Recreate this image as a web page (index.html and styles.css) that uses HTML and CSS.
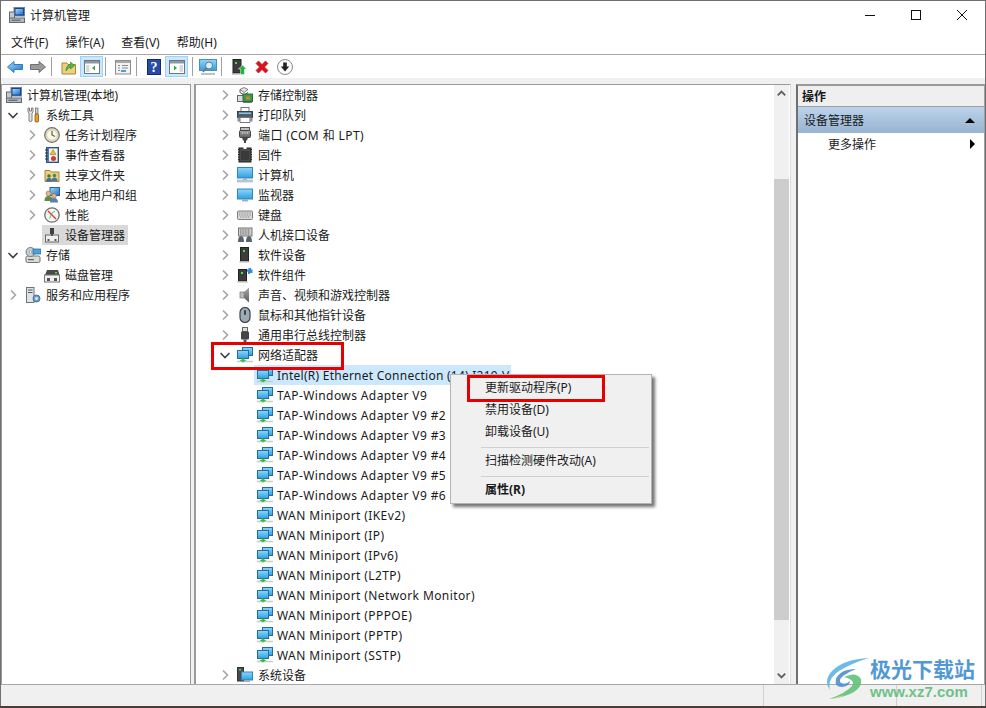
FILE: index.html
```html
<!DOCTYPE html>
<html lang="zh-CN">
<head>
    <meta charset="UTF-8">
    <title>计算机管理</title>
    <link rel="stylesheet" href="styles.css">
</head>
<body>
    <!-- iconos -->
    <svg class="defs" width="0" height="0">
        <defs>
            <linearGradient id="g-screen" x1="0" y1="0" x2="0" y2="1"><stop offset="0" stop-color="#8fd6fa"/><stop offset="1" stop-color="#2f9fe0"/></linearGradient>
            <linearGradient id="g-blue" x1="0" y1="0" x2="1" y2="1"><stop offset="0" stop-color="#9ed8fb"/><stop offset="1" stop-color="#1e74c4"/></linearGradient>
            <linearGradient id="g-gray" x1="0" y1="0" x2="0" y2="1"><stop offset="0" stop-color="#a8a8a8"/><stop offset="1" stop-color="#5c5c5c"/></linearGradient>
            <symbol id="c-right" viewBox="0 0 16 16"><path d="M6 3.500l4.500 4.500-4.500 4.500" fill="none" stroke="#a6a6a6" stroke-width="1.600"/></symbol>
            <symbol id="c-down" viewBox="0 0 16 16"><path d="M3.500 6l4.500 4.500 4.500-4.500" fill="none" stroke="#404040" stroke-width="1.600"/></symbol>
            <symbol id="i-mgmt" viewBox="0 0 16 16"><rect x="5" y="0.500" width="10.500" height="8.500" fill="#1d3f9e" stroke="#6d7f9a"/><rect x="6.500" y="2" width="7.500" height="5.500" fill="url(#g-blue)"/><rect x="0.500" y="5" width="5" height="8" fill="#c4c8cc" stroke="#5f6a74"/><rect x="0.500" y="11" width="15" height="4.500" fill="#b4b9bd" stroke="#5f6a74"/><rect x="2.500" y="12.700" width="9" height="1" fill="#555"/></symbol>
            <symbol id="i-tools" viewBox="0 0 16 16"><path d="M3 1v4l1 1v8q1.500 1 3 0V6l1-1V1L6.500 1v3h-2V1z" fill="#e4e4e4" stroke="#666" stroke-width=".8"/><rect x="10.500" y="1" width="2.500" height="6" fill="#d0d0d0" stroke="#666" stroke-width=".7"/><rect x="10" y="7" width="3.500" height="8" rx="1" fill="#e0a526" stroke="#82570c" stroke-width=".8"/></symbol>
            <symbol id="i-clock" viewBox="0 0 16 16"><circle cx="8" cy="8" r="7.300" fill="#e9e3c9" stroke="#70706a" stroke-width="1.200"/><circle cx="8" cy="8" r="5.300" fill="#fbf8e6" stroke="#c5bd93" stroke-width=".6"/><path d="M8 3.800V8l3 1.500" fill="none" stroke="#5b5b50" stroke-width="1.200"/></symbol>
            <symbol id="i-log" viewBox="0 0 16 16"><rect x="2.500" y="0.500" width="12" height="15" fill="#4f7fb4" stroke="#2f527c"/><rect x="5" y="1.500" width="8.500" height="13" fill="#f4f4ee"/><path d="M1 3h3M1 6h3M1 9h3M1 12h3" stroke="#333" stroke-width="1"/><path d="M9 2.500l3 5H6z" fill="#f0c020" stroke="#8a6a00" stroke-width=".5"/><circle cx="9.500" cy="11.500" r="2.500" fill="#d23a3a"/></symbol>
            <symbol id="i-share" viewBox="0 0 16 16"><path d="M1 3.500h5l1.500 1.500h7.500v9.500H1z" fill="#edcf80" stroke="#a5843a"/><circle cx="5" cy="9" r="1.800" fill="#3f7f3a"/><path d="M2 14.500q0-3.500 3-3.500t3 3.500z" fill="#3f6fa8"/><circle cx="10.500" cy="8.500" r="1.800" fill="#4b8b46"/><path d="M7.500 14q0-3.500 3-3.500t3 3.500z" fill="#4578b0"/></symbol>
            <symbol id="i-users" viewBox="0 0 16 16"><rect x="6" y="0.500" width="9.500" height="8" fill="url(#g-blue)" stroke="#3b5f8a"/><circle cx="4.500" cy="6.500" r="2.500" fill="#e3b78a" stroke="#7a5a3a" stroke-width=".5"/><path d="M0.500 14q0-5 4-5t4 5z" fill="#5b8c4a"/><circle cx="10" cy="9" r="2.300" fill="#e3b78a" stroke="#7a5a3a" stroke-width=".5"/><path d="M6 15.500q0-4.500 4-4.500t4 4.500z" fill="#5c7ea8"/></symbol>
            <symbol id="i-perf" viewBox="0 0 16 16"><circle cx="8" cy="8" r="7.200" fill="#f6f6f0" stroke="#6e6e6e" stroke-width="1.300"/><path d="M4 4l5 5 3 3" stroke="#d33" stroke-width="1.300" fill="none"/><path d="M5.500 11.500L8 6l3-2" stroke="#3a6" stroke-width=".8" fill="none"/></symbol>
            <symbol id="i-dev" viewBox="0 0 16 16"><rect x="6" y="1" width="4" height="6" fill="#3f3f3f"/><rect x="1.500" y="8" width="13" height="7" fill="#efefef" stroke="#6a6a6a"/><rect x="3.500" y="12" width="2" height="2" fill="#555"/><rect x="10.500" y="12" width="2" height="2" fill="#555"/><rect x="7" y="7" width="2" height="2" fill="#555"/></symbol>
            <symbol id="i-store" viewBox="0 0 16 16"><rect x="1" y="9" width="14" height="6.500" rx="1.500" fill="#d8dcd8" stroke="#6c756c"/><rect x="3" y="12" width="6" height="1.200" fill="#666"/><circle cx="5.500" cy="5" r="4.500" fill="#c9ced0" stroke="#6f7a80"/><circle cx="5.500" cy="5" r="1.300" fill="#fff" stroke="#6f7a80" stroke-width=".6"/><rect x="8" y="2" width="7.500" height="5" fill="#4aa3dd" stroke="#2d6f9e" stroke-width=".8"/></symbol>
            <symbol id="i-disk" viewBox="0 0 16 16"><path d="M3 3h11l1.500 5H1z" fill="#4a4a4a"/><rect x="0.500" y="8" width="15" height="7" fill="#efefef" stroke="#777"/><rect x="3" y="11" width="3" height="3" fill="#555"/><rect x="10" y="11" width="3" height="3" fill="#555"/><rect x="11" y="5" width="2" height="1.500" fill="#4ce04c"/></symbol>
            <symbol id="i-svc" viewBox="0 0 16 16"><rect x="1.500" y="0.500" width="7.500" height="15" fill="#dfe3e6" stroke="#6c747a"/><path d="M3 3h4.500M3 5.500h4.500" stroke="#556" stroke-width="1"/><circle cx="11.500" cy="11.500" r="3.500" fill="#6ea0cc" stroke="#47719a"/><circle cx="11.500" cy="11.500" r="1.300" fill="#eef4fa"/></symbol>
            <symbol id="i-ctrl" viewBox="0 0 16 16"><path d="M3 2.500l4-2 4 2-4 3z" fill="#e4e4e4" stroke="#555" stroke-width=".7"/><path d="M3 2.500v3l4 2.500 4-2.500" fill="none" stroke="#555"/><rect x="0.500" y="8.500" width="8" height="6" fill="#dcdcdc" stroke="#666"/><rect x="6" y="7" width="9.500" height="7.500" fill="#3f9a4e" stroke="#2c6b37"/><rect x="9" y="9.500" width="4" height="3" fill="#c58a2a"/><path d="M6 15.500h9" stroke="#777"/></symbol>
            <symbol id="i-print" viewBox="0 0 16 16"><rect x="4" y="0.500" width="8" height="4" fill="#fff" stroke="#777"/><rect x="0.500" y="4.500" width="15" height="6" fill="#555c66" stroke="#3c4148"/><rect x="2" y="5.500" width="12" height="1.500" fill="#7fc7ee"/><path d="M3 10.500h10v5H3z" fill="#fff" stroke="#777"/><path d="M0.500 10.500h2.500v4H0.500zM13 10.500h2.500v4H13z" fill="#8a8f96"/></symbol>
            <symbol id="i-port" viewBox="0 0 16 16"><rect x="3.500" y="0.500" width="9" height="3" fill="#c0c0c0" stroke="#555"/><rect x="2.500" y="3.500" width="11" height="7" rx="1" fill="url(#g-gray)" stroke="#444"/><path d="M5 6h1M7.500 6h1M10 6h1" stroke="#eee"/><path d="M5 10.500h6l-1 3H6z" fill="#444"/><rect x="7" y="13" width="2" height="3" fill="#444"/></symbol>
            <symbol id="i-chip" viewBox="0 0 16 16"><rect x="2" y="1" width="12" height="14" fill="#4a4a4a" stroke="#222"/><path d="M2 2.500H1M2 5H1M2 7.500H1M2 10H1M2 12.500H1M14 2.500h1M14 5h1M14 7.500h1M14 10h1M14 12.500h1" stroke="#222"/><rect x="6.500" y="0" width="3" height="2" fill="#fff"/><rect x="4" y="4" width="8" height="9" fill="#3a3a3a"/></symbol>
            <symbol id="i-pc" viewBox="0 0 16 16"><rect x="0.500" y="0.500" width="15" height="10.500" fill="url(#g-screen)" stroke="#2e87bd"/><rect x="6" y="11" width="4" height="2" fill="#a8b6bf"/><rect x="0.500" y="13" width="15" height="2" fill="#c9d3d9" stroke="#99a5ad" stroke-width=".6"/></symbol>
            <symbol id="i-mon" viewBox="0 0 16 16"><rect x="0.500" y="2" width="15" height="10" fill="url(#g-screen)" stroke="#2e87bd"/><rect x="5" y="12" width="6" height="2.500" fill="#9fb0ba"/></symbol>
            <symbol id="i-kbd" viewBox="0 0 16 16"><rect x="0.500" y="4" width="15" height="8.500" rx="1" fill="#d8d8d8" stroke="#7e7e7e"/><path d="M2 6h12M2 8h12M3 10h10" stroke="#8e8e8e" stroke-dasharray="1 .6"/></symbol>
            <symbol id="i-hid" viewBox="0 0 16 16"><rect x="1.500" y="1" width="13.500" height="8" fill="#cfcfcf" stroke="#777"/><path d="M3 3h10M3 5h10M3 7h10" stroke="#666" stroke-dasharray="1 .6"/><path d="M1 15q0-6 3-6t3 6zM9 15q0-6 3-6t3 6z" fill="#586270"/></symbol>
            <symbol id="i-sw" viewBox="0 0 16 16"><rect x="3.500" y="0.500" width="8" height="13.500" fill="#3c3c3c" stroke="#222"/><rect x="6" y="3" width="2" height="2" fill="#4ae04a"/><rect x="2.500" y="14" width="10" height="1.500" fill="#b5b5b5"/></symbol>
            <symbol id="i-comp" viewBox="0 0 16 16"><rect x="1.500" y="2.500" width="8" height="11.500" fill="#3c3c3c" stroke="#222"/><rect x="4" y="5" width="2" height="2" fill="#4ae04a"/><rect x="0.500" y="14" width="10" height="1.500" fill="#b5b5b5"/><path d="M10 4V2.500h1.500V1H14v1.500h1.500v3.500H13v1h-2V5.500z" fill="#2e8fd8"/></symbol>
            <symbol id="i-snd" viewBox="0 0 16 16"><rect x="3" y="5" width="4" height="6" fill="#bdbdbd" stroke="#777" stroke-width=".7"/><path d="M7 5l5-4.500v15L7 11z" fill="url(#g-gray)"/></symbol>
            <symbol id="i-mouse" viewBox="0 0 16 16"><rect x="3" y="0.500" width="10" height="15" rx="5" fill="#9eabb5" stroke="#39424a" stroke-width="1.200"/><rect x="7" y="3" width="2" height="5" rx="1" fill="#39424a"/></symbol>
            <symbol id="i-usb" viewBox="0 0 16 16"><rect x="5.500" y="0.500" width="5" height="4" fill="#ddd" stroke="#666"/><rect x="4" y="4.500" width="8" height="8" rx="1" fill="#454545"/><rect x="6.500" y="12.500" width="3" height="3" fill="#555"/></symbol>
            <symbol id="i-net" viewBox="0 0 16 16"><rect x="5.500" y="0.500" width="10" height="8" fill="url(#g-screen)" stroke="#1e6f9f"/><rect x="0.500" y="3.500" width="11" height="8" fill="url(#g-screen)" stroke="#1e6f9f"/><path d="M0 14.500h16" stroke="#c5cdc5" stroke-width="1.500"/><path d="M4.500 11.500h3V13H9.500L6 15.500 2.500 13h2z" fill="#3fbd3f"/></symbol>
            <symbol id="i-sys" viewBox="0 0 16 16"><rect x="0.500" y="0.500" width="6" height="13.500" fill="#4a4a4a" stroke="#333"/><rect x="2" y="2" width="2" height="1.500" fill="#4ae04a"/><rect x="4.500" y="5" width="11" height="8" fill="url(#g-screen)" stroke="#2e87bd"/><rect x="7" y="13" width="6" height="2" fill="#9fb0ba"/></symbol>
        </defs>
    </svg>

    <div class="window">
        <div class="titlebar">
            <svg class="ico"><use href="#i-mgmt"/></svg>
            <span class="title-text">计算机管理</span>
            <div class="win-btns">
                <svg width="46" height="16" viewBox="0 0 46 16"><path d="M18 8.500h10" stroke="#111"/></svg>
                <svg width="46" height="16" viewBox="0 0 46 16"><rect x="18.500" y="3.500" width="9" height="9" fill="none" stroke="#111"/></svg>
                <svg width="46" height="16" viewBox="0 0 46 16"><path d="M18 3l10 10M28 3L18 13" stroke="#111"/></svg>
            </div>
        </div>
        <div class="menubar">
            <span>文件(F)</span>
            <span>操作(A)</span>
            <span>查看(V)</span>
            <span>帮助(H)</span>
        </div>
        <div class="toolbar">
            <div class="tb-btn"><svg width="16" height="16" viewBox="0 0 16 16"><path d="M0.500 8L7 2.500V5.500h8.500v5H7v3z" fill="url(#g-blue)" stroke="#2d7cc0"/></svg></div>
            <div class="tb-btn"><svg width="16" height="16" viewBox="0 0 16 16"><path d="M15.500 8L9 2.500V5.500H0.500v5H9v3z" fill="#9a9a9a" stroke="#6e6e6e"/></svg></div>
            <div class="tb-sep"></div>
            <div class="tb-btn"><svg width="16" height="16" viewBox="0 0 16 16"><path d="M1 4h5l1 1.500h7.500V15H1z" fill="#ecd07e" stroke="#a98834"/><path d="M5 12q0-6 4.500-6.500V3l4 3.500-4 3.500V8Q7 8.500 5 12z" fill="#53b84a" stroke="#2f8029" stroke-width=".6"/></svg></div>
            <div class="tb-btn on"><svg width="16" height="16" viewBox="0 0 16 16"><rect x="0.500" y="1.500" width="15" height="13" fill="#fff" stroke="#6d7680"/><rect x="1" y="2" width="14" height="2.500" fill="#8d98a3"/><rect x="2" y="6" width="3.500" height="7" fill="#d6dbe0"/><path d="M11 6.500v5l-3-2.500z" fill="#2da84a"/></svg></div>
            <div class="tb-sep"></div>
            <div class="tb-btn"><svg width="16" height="16" viewBox="0 0 16 16"><rect x="0.500" y="1.500" width="15" height="13.500" fill="#f2f2f2" stroke="#8c8c8c"/><rect x="1" y="2" width="14" height="2" fill="#a9a9a9"/><path d="M3 6.500h2M3 9h2M3 11.500h2M7 6.500h6M7 9h6" stroke="#8a8a8a"/><rect x="6" y="11" width="5" height="2" fill="#4a9fd8"/></svg></div>
            <div class="tb-sep"></div>
            <div class="tb-btn"><svg width="14" height="16" viewBox="0 0 14 16"><rect x="0.500" y="0.500" width="13" height="15" fill="#2a4aa8" stroke="#16296b"/><text x="7" y="13" class="help-q">?</text></svg></div>
            <div class="tb-btn on"><svg width="16" height="16" viewBox="0 0 16 16"><rect x="0.500" y="1.500" width="15" height="13" fill="#fff" stroke="#6d7680"/><rect x="1" y="2" width="14" height="2.500" fill="#8d98a3"/><rect x="10.500" y="6" width="3.500" height="7" fill="#d6dbe0"/><path d="M5 6.500v5l3-2.500z" fill="#2da84a"/></svg></div>
            <div class="tb-sep wide"></div>
            <div class="tb-btn"><svg width="18" height="16" viewBox="0 0 18 16"><rect x="0.500" y="0.500" width="17" height="11" fill="url(#g-screen)" stroke="#4f8fb6"/><path d="M2 15h14" stroke="#9fb0ba" stroke-width="1.500"/><circle cx="10" cy="6.500" r="3.500" fill="#d7eefb" stroke="#6b7780"/><path d="M7.500 9L4 13" stroke="#6b7780" stroke-width="1.500"/></svg></div>
            <div class="tb-sep"></div>
            <div class="tb-btn"><svg width="16" height="16" viewBox="0 0 16 16"><rect x="2" y="0.500" width="8" height="13.500" fill="#3c3c3c" stroke="#222"/><rect x="4" y="3" width="2" height="2" fill="#4ae04a"/><rect x="1" y="14" width="9" height="1.500" fill="#a5a5a5"/><path d="M11.500 6l4 4H13.500v5.500h-4V10H7.500z" fill="#25b33f" stroke="#fff" stroke-width=".5"/></svg></div>
            <div class="tb-btn"><svg width="16" height="16" viewBox="0 0 16 16"><path d="M2 4.500L4.500 2 8 5.500 11.500 2 14 4.500 10.500 8 14 11.500 11.500 14 8 10.500 4.500 14 2 11.500 5.500 8z" fill="#d8141a" stroke="#b00d12" stroke-width=".6"/></svg></div>
            <div class="tb-btn"><svg width="16" height="16" viewBox="0 0 16 16"><circle cx="8" cy="8" r="7.500" fill="#fafafa" stroke="#8c8c8c"/><path d="M6.200 3.500h3.600v4h2.400L8 12.500 3.800 7.500h2.400z" fill="#222"/></svg></div>
        </div>

        <div class="panes">
            <div class="pane pane-left">
                <div class="row root"><svg class="ico"><use href="#i-mgmt"/></svg><span class="label">计算机管理(本地)</span></div>
                <div class="row d1"><svg class="tw"><use href="#c-down"/></svg><svg class="ico"><use href="#i-tools"/></svg><span class="label">系统工具</span></div>
                <div class="row d2"><svg class="tw"><use href="#c-right"/></svg><svg class="ico"><use href="#i-clock"/></svg><span class="label">任务计划程序</span></div>
                <div class="row d2"><svg class="tw"><use href="#c-right"/></svg><svg class="ico"><use href="#i-log"/></svg><span class="label">事件查看器</span></div>
                <div class="row d2"><svg class="tw"><use href="#c-right"/></svg><svg class="ico"><use href="#i-share"/></svg><span class="label">共享文件夹</span></div>
                <div class="row d2"><svg class="tw"><use href="#c-right"/></svg><svg class="ico"><use href="#i-users"/></svg><span class="label">本地用户和组</span></div>
                <div class="row d2"><svg class="tw"><use href="#c-right"/></svg><svg class="ico"><use href="#i-perf"/></svg><span class="label">性能</span></div>
                <div class="row d2"><span class="tw"></span><div class="cur"><svg class="ico"><use href="#i-dev"/></svg><span class="label">设备管理器</span></div></div>
                <div class="row d1"><svg class="tw"><use href="#c-down"/></svg><svg class="ico"><use href="#i-store"/></svg><span class="label">存储</span></div>
                <div class="row d2"><span class="tw"></span><svg class="ico"><use href="#i-disk"/></svg><span class="label">磁盘管理</span></div>
                <div class="row d1"><svg class="tw"><use href="#c-right"/></svg><svg class="ico"><use href="#i-svc"/></svg><span class="label">服务和应用程序</span></div>
            </div>

            <div class="pane pane-mid">
                <div class="devlist">
                    <div class="row dev"><svg class="tw"><use href="#c-right"/></svg><svg class="ico"><use href="#i-ctrl"/></svg><span class="label">存储控制器</span></div>
                    <div class="row dev"><svg class="tw"><use href="#c-right"/></svg><svg class="ico"><use href="#i-print"/></svg><span class="label">打印队列</span></div>
                    <div class="row dev"><svg class="tw"><use href="#c-right"/></svg><svg class="ico"><use href="#i-port"/></svg><span class="label wide-text">端口 (COM 和 LPT)</span></div>
                    <div class="row dev"><svg class="tw"><use href="#c-right"/></svg><svg class="ico"><use href="#i-chip"/></svg><span class="label">固件</span></div>
                    <div class="row dev"><svg class="tw"><use href="#c-right"/></svg><svg class="ico"><use href="#i-pc"/></svg><span class="label">计算机</span></div>
                    <div class="row dev"><svg class="tw"><use href="#c-right"/></svg><svg class="ico"><use href="#i-mon"/></svg><span class="label">监视器</span></div>
                    <div class="row dev"><svg class="tw"><use href="#c-right"/></svg><svg class="ico"><use href="#i-kbd"/></svg><span class="label">键盘</span></div>
                    <div class="row dev"><svg class="tw"><use href="#c-right"/></svg><svg class="ico"><use href="#i-hid"/></svg><span class="label">人机接口设备</span></div>
                    <div class="row dev"><svg class="tw"><use href="#c-right"/></svg><svg class="ico"><use href="#i-sw"/></svg><span class="label">软件设备</span></div>
                    <div class="row dev"><svg class="tw"><use href="#c-right"/></svg><svg class="ico"><use href="#i-comp"/></svg><span class="label">软件组件</span></div>
                    <div class="row dev"><svg class="tw"><use href="#c-right"/></svg><svg class="ico"><use href="#i-snd"/></svg><span class="label">声音、视频和游戏控制器</span></div>
                    <div class="row dev"><svg class="tw"><use href="#c-right"/></svg><svg class="ico"><use href="#i-mouse"/></svg><span class="label">鼠标和其他指针设备</span></div>
                    <div class="row dev"><svg class="tw"><use href="#c-right"/></svg><svg class="ico"><use href="#i-usb"/></svg><span class="label">通用串行总线控制器</span></div>
                    <div class="row dev"><svg class="tw"><use href="#c-down"/></svg><svg class="ico"><use href="#i-net"/></svg><span class="label">网络适配器</span></div>
                    <div class="row kid"><div class="sel"><svg class="ico"><use href="#i-net"/></svg><span class="label">Intel(R) Ethernet Connection (14) I219-V</span></div></div>
                    <div class="row kid"><div class="item"><svg class="ico"><use href="#i-net"/></svg><span class="label">TAP-Windows Adapter V9</span></div></div>
                    <div class="row kid"><div class="item"><svg class="ico"><use href="#i-net"/></svg><span class="label">TAP-Windows Adapter V9 #2</span></div></div>
                    <div class="row kid"><div class="item"><svg class="ico"><use href="#i-net"/></svg><span class="label">TAP-Windows Adapter V9 #3</span></div></div>
                    <div class="row kid"><div class="item"><svg class="ico"><use href="#i-net"/></svg><span class="label">TAP-Windows Adapter V9 #4</span></div></div>
                    <div class="row kid"><div class="item"><svg class="ico"><use href="#i-net"/></svg><span class="label">TAP-Windows Adapter V9 #5</span></div></div>
                    <div class="row kid"><div class="item"><svg class="ico"><use href="#i-net"/></svg><span class="label">TAP-Windows Adapter V9 #6</span></div></div>
                    <div class="row kid"><div class="item"><svg class="ico"><use href="#i-net"/></svg><span class="label">WAN Miniport (IKEv2)</span></div></div>
                    <div class="row kid"><div class="item"><svg class="ico"><use href="#i-net"/></svg><span class="label">WAN Miniport (IP)</span></div></div>
                    <div class="row kid"><div class="item"><svg class="ico"><use href="#i-net"/></svg><span class="label">WAN Miniport (IPv6)</span></div></div>
                    <div class="row kid"><div class="item"><svg class="ico"><use href="#i-net"/></svg><span class="label">WAN Miniport (L2TP)</span></div></div>
                    <div class="row kid"><div class="item"><svg class="ico"><use href="#i-net"/></svg><span class="label">WAN Miniport (Network Monitor)</span></div></div>
                    <div class="row kid"><div class="item"><svg class="ico"><use href="#i-net"/></svg><span class="label">WAN Miniport (PPPOE)</span></div></div>
                    <div class="row kid"><div class="item"><svg class="ico"><use href="#i-net"/></svg><span class="label">WAN Miniport (PPTP)</span></div></div>
                    <div class="row kid"><div class="item"><svg class="ico"><use href="#i-net"/></svg><span class="label">WAN Miniport (SSTP)</span></div></div>
                    <div class="row dev"><svg class="tw"><use href="#c-right"/></svg><svg class="ico"><use href="#i-sys"/></svg><span class="label">系统设备</span></div>
                </div>
                <div class="scrollbar">
                    <svg class="sb-arrow" viewBox="0 0 16 17"><path d="M4 10.500l4-4 4 4" fill="none" stroke="#606060" stroke-width="2"/></svg>
                    <div class="sb-track"><div class="sb-thumb"></div></div>
                    <svg class="sb-arrow" viewBox="0 0 16 17"><path d="M4 6.500l4 4 4-4" fill="none" stroke="#606060" stroke-width="2"/></svg>
                </div>
            </div>

            <div class="pane pane-right">
                <div class="act-head">操作</div>
                <div class="act-group"><span>设备管理器</span><i class="tri-up"></i></div>
                <div class="act-item"><span>更多操作</span><i class="tri-right"></i></div>
            </div>
        </div>

        <div class="statusbar">
            <div class="st st-main"></div>
            <div class="st st-b"></div>
            <div class="st st-c"></div>
        </div>

        <!-- menu contextual -->
        <div class="ctx">
            <div class="ctx-item">更新驱动程序(P)</div>
            <div class="ctx-item">禁用设备(D)</div>
            <div class="ctx-item">卸载设备(U)</div>
            <div class="ctx-sep"></div>
            <div class="ctx-item">扫描检测硬件改动(A)</div>
            <div class="ctx-sep"></div>
            <div class="ctx-item strong">属性(R)</div>
        </div>

        <div class="mark mark-net"></div>
        <div class="mark mark-update"></div>

        <!-- marca de agua -->
        <div class="wm">
            <svg class="wm-logo" viewBox="0 0 44 42">
                <path d="M43 1Q18 2 6 14Q-3 24 4 33Q1 22 13 14Q26 6 43 1z" fill="#5db4e8"/>
                <path d="M30 12Q14 12 10 22Q8 30 16 30Q24 29 24 24Q20 28 15 26Q12 23 17 19Q22 15 30 12z" fill="#4f8fd0"/>
                <path d="M18 20Q30 14 35 22Q37 31 24 37Q15 41 3 42Q20 36 26 29Q30 23 18 20z" fill="#63c27a"/>
                <path d="M3 42Q14 40 22 36L12 41z" fill="#e4e070"/>
            </svg>
            <div class="wm-text">
                <div class="wm-cn">极光下载站</div>
                <div class="wm-url">www.xz7.com</div>
            </div>
        </div>
    </div>
</body>
</html>
```

FILE: styles.css
```css
* {
    box-sizing: border-box;
}
html, body {
    margin: 0;
    padding: 0;
    background: #4a3f38;
}
body {
    font-family: "Noto Sans", "Noto Sans CJK SC", sans-serif;
    font-size: 12px;
    color: #1a1a1a;
    width: 986px;
    height: 708px;
    overflow: hidden;
}
.defs {
    position: absolute;
}
.window {
    position: relative;
    width: 986px;
    height: 706px;
    background: #f0f0f0;
    border: 1px solid #6f6f6f;
    border-bottom: 0;
    display: flex;
    flex-direction: column;
}
.ico {
    width: 16px;
    height: 16px;
    flex: none;
}
.titlebar {
    height: 29px;
    background: #fff;
    display: flex;
    align-items: center;
    padding: 0 0 2px 8px;
}
.title-text {
    margin-left: 5px;
}
.win-btns {
    margin-left: auto;
    display: flex;
}
.menubar {
    height: 25px;
    background: #fff;
    border-bottom: 1px solid #a6a6a6;
    display: flex;
    align-items: center;
    padding-left: 10px;
    gap: 17px;
    padding-bottom: 1px;
}
.toolbar {
    height: 23px;
    background: #fff;
    display: flex;
    align-items: center;
    padding-left: 2px;
}
.tb-btn {
    width: 23px;
    height: 21px;
    display: flex;
    align-items: center;
    justify-content: center;
    border: 1px solid transparent;
}
.tb-btn.on {
    background: #cce8ff;
    border-color: #99d1ff;
}
.help-q {
    font-family: "Liberation Serif", serif;
    font-size: 14px;
    font-weight: bold;
    fill: #fff;
    text-anchor: middle;
}
.tb-sep {
    width: 1px;
    height: 19px;
    background: #a0a0a0;
    margin: 0 5px 0 2px;
}
.tb-sep.wide {
    margin: 0 3px 0 4px;
}
.panes {
    height: 600px;
    margin-top: 6px;
    display: flex;
}
.pane {
    background: #fff;
    border-top: 1px solid #9a9a9a;
    overflow: hidden;
}
.pane-left {
    width: 190px;
    border-left: 1px solid #9a9a9a;
    border-right: 1px solid #9a9a9a;
}
.pane-mid {
    width: 597px;
    margin-left: 3px;
    border-left: 2px solid #9a9a9a;
    border-right: 1px solid #dcdcdc;
    display: flex;
}
.pane-right {
    margin-left: 5px;
    flex: 1;
    border-left: 2px solid #707070;
    border-right: 1px solid #a0a0a0;
    border-top-width: 2px;
}
.row {
    height: 20px;
    display: flex;
    align-items: center;
    white-space: nowrap;
}
.tw {
    width: 16px;
    height: 16px;
    flex: none;
    margin-right: 4px;
}
.label {
    margin-left: 5px;
}
.wide-text {
    letter-spacing: 0.4px;
}
.root {
    padding-left: 4px;
}
.d1 {
    padding-left: 3px;
}
.d2 {
    padding-left: 22px;
}
.cur {
    height: 20px;
    display: flex;
    align-items: center;
    background: #d9d9d9;
    margin-left: -2px;
    padding: 0 3px 0 2px;
}
.devlist {
    flex: 1;
    overflow: hidden;
}
.dev {
    padding-left: 21px;
}
.kid {
    padding-left: 58px;
}
.sel, .item {
    height: 20px;
    display: flex;
    align-items: center;
    padding-left: 3px;
}
.sel {
    background: #cce8ff;
    padding-right: 2px;
}
.kid .label {
    margin-left: 4px;
    letter-spacing: 0.4px;
}
.kid .sel .label {
    letter-spacing: 0.25px;
}
.scrollbar {
    width: 15px;
    margin-right: 1px;
    background: #f0f0f0;
    display: flex;
    flex-direction: column;
}
.sb-arrow {
    width: 15px;
    height: 17px;
    flex: none;
}
.sb-track {
    flex: 1;
}
.sb-thumb {
    margin-top: 77px;
    height: 441px;
    background: #cdcdcd;
}
.act-head {
    height: 21px;
    background: #efefef;
    border-bottom: 1px solid #a0a0a0;
    padding-left: 4px;
    line-height: 21px;
    font-weight: bold;
}
.act-group {
    height: 26px;
    background: linear-gradient(#bcd3ea, #98b4d2);
    display: flex;
    align-items: center;
    justify-content: space-between;
    padding: 0 9px 0 6px;
}
.act-item {
    height: 22px;
    display: flex;
    align-items: center;
    justify-content: space-between;
    padding: 0 9px 0 30px;
}
.tri-up {
    width: 0;
    height: 0;
    border-left: 5px solid transparent;
    border-right: 5px solid transparent;
    border-bottom: 5px solid #000;
}
.tri-right {
    width: 0;
    height: 0;
    border-top: 5px solid transparent;
    border-bottom: 5px solid transparent;
    border-left: 5px solid #000;
}
.statusbar {
    flex: 1;
    display: flex;
    border-top: 1px solid #a8a8a8;
}
.st {
    border-right: 1px solid #d0d0d0;
}
.st-main {
    width: 763px;
}
.st-b {
    width: 133px;
}
.st-c {
    width: 85px;
}
.ctx {
    position: absolute;
    left: 449px;
    top: 373px;
    width: 202px;
    height: 130px;
    background: #f0f0f0;
    border: 1px solid #b4b4b4;
    box-shadow: 3px 3px 3px rgba(0, 0, 0, 0.55);
    padding-top: 2px;
}
.ctx-item {
    height: 22px;
    line-height: 22px;
    padding-left: 34px;
}
.ctx-item.strong {
    font-weight: bold;
}
.ctx-sep {
    height: 1px;
    background: #d0d0d0;
    margin: 4px 2px 2px 30px;
}
.mark {
    position: absolute;
    border: 3px solid #e60000;
}
.mark-net {
    left: 210px;
    top: 341px;
    width: 133px;
    height: 28px;
}
.mark-update {
    left: 466px;
    top: 374px;
    width: 138px;
    height: 27px;
}
.wm {
    position: absolute;
    left: 825px;
    top: 654px;
    display: flex;
    opacity: 0.9;
}
.wm-logo {
    width: 44px;
    height: 42px;
    margin-top: 2px;
}
.wm-cn {
    font-family: "Noto Sans CJK SC", sans-serif;
    font-size: 21px;
    font-weight: bold;
    line-height: 26px;
    color: #3f8fd2;
}
.wm-url {
    font-family: "Liberation Sans", sans-serif;
    font-size: 15px;
    font-weight: bold;
    line-height: 18px;
    margin-top: 2px;
    color: #62bd7d;
}
```
